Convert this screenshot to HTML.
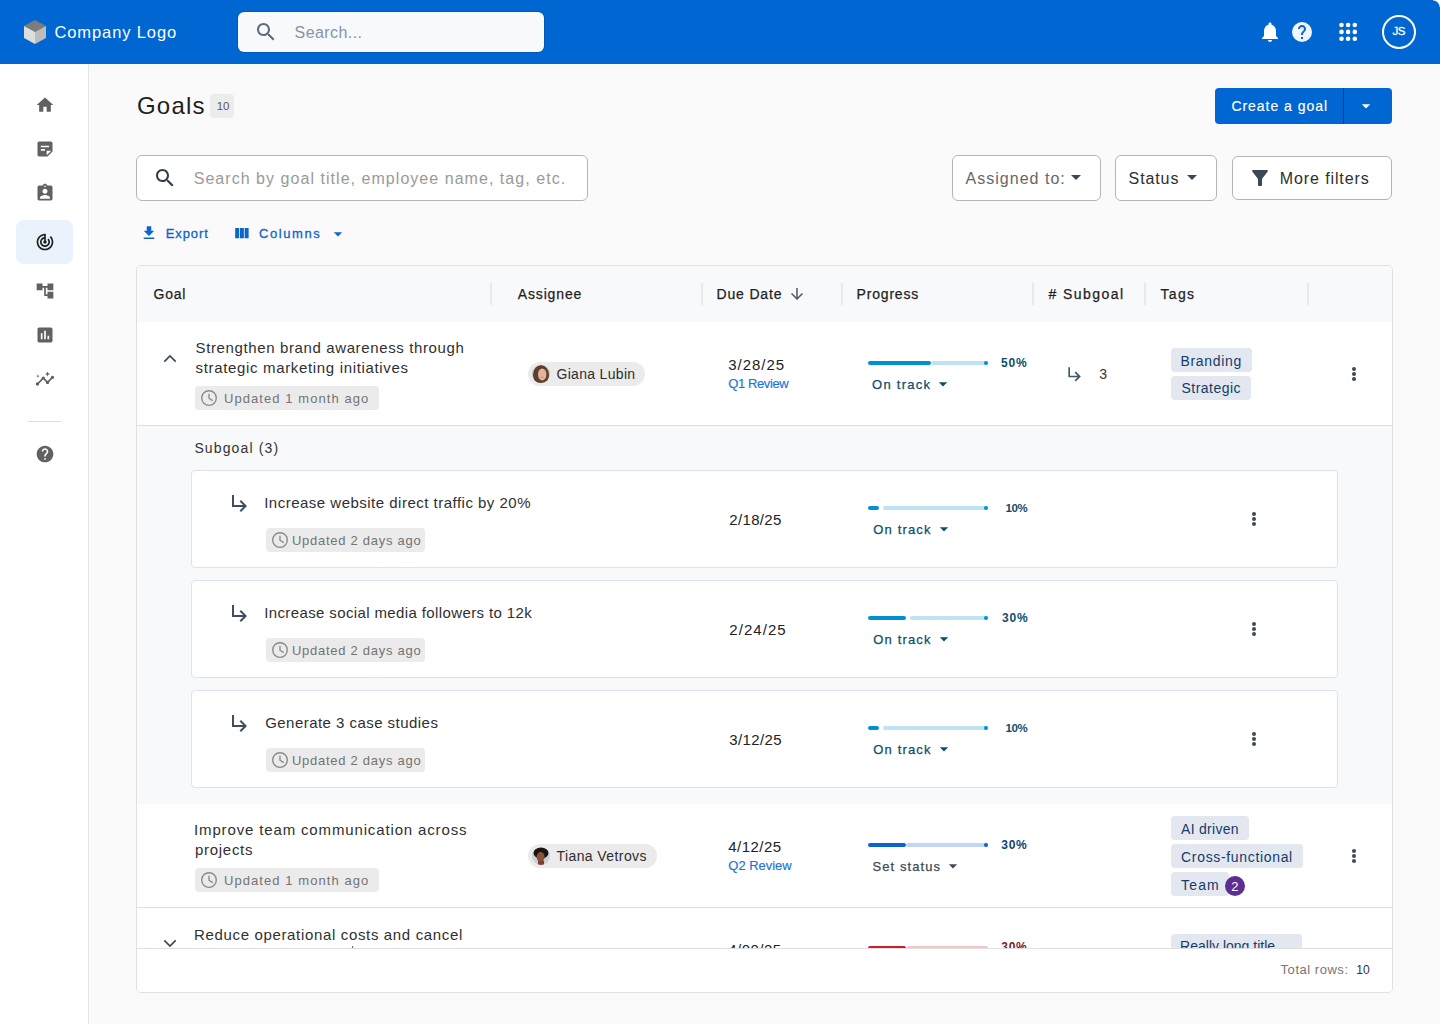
<!DOCTYPE html>
<html><head><meta charset="utf-8"><style>
html,body{margin:0;padding:0;width:1440px;height:1024px;overflow:hidden;background:#fafafa;font-family:"Liberation Sans", sans-serif;}
</style></head><body>
<div style="position:absolute;left:0px;top:0px;width:1440px;height:64px;background:#0066d2"></div>
<div style="position:absolute;left:1433px;top:0px;width:7px;height:7px;background:radial-gradient(circle at 0 100%, rgba(255,255,255,0) 6px, #fff 7px)"></div>
<div style="position:absolute;left:0px;top:64px;width:89px;height:960px;background:#fff;border-right:1px solid #e3e3e3;box-sizing:border-box"></div>
<svg style="position:absolute;left:24px;top:20px;width:22px;height:24px" viewBox="0 0 22 24">
<path d="M11 0.3 L21.7 6 L11 12.2 L0.3 6 Z" fill="#7c7c7c" stroke="#7c7c7c" stroke-width="0.6" stroke-linejoin="round"/>
<path d="M0 6 L11 12 L11 24 L0 18 Z" fill="#dedede"/>
<path d="M22 6 L11 12 L11 24 L22 18 Z" fill="#bdbdbd"/></svg>
<div style="position:absolute;left:238px;top:12px;width:306px;height:40px;background:#f8f9fb;border-radius:6px;box-shadow:0 0 0 1px rgba(0,0,0,0.12)"></div>
<svg style="position:absolute;left:254px;top:20px;width:24px;height:24px" viewBox="0 0 24 24"><path fill="#5b6b7a" d="M15.5 14h-.79l-.28-.27C15.41 12.59 16 11.11 16 9.5 16 5.91 13.09 3 9.5 3S3 5.91 3 9.5 5.91 16 9.5 16c1.61 0 3.09-.59 4.23-1.57l.27.28v.79l5 4.99L20.49 19l-4.99-5zm-6 0C7.01 14 5 11.99 5 9.5S7.01 5 9.5 5 14 7.01 14 9.5 11.99 14 9.5 14z"/></svg>
<svg style="position:absolute;left:1258px;top:19.5px;width:24px;height:24px" viewBox="0 0 24 24"><path fill="#ffffff" d="M12 22c1.1 0 2-.9 2-2h-4c0 1.1.89 2 2 2zm6-6v-5c0-3.07-1.64-5.64-4.5-6.32V4c0-.83-.67-1.5-1.5-1.5s-1.5.67-1.5 1.5v.68C7.63 5.36 6 7.92 6 11v5l-2 2v1h16v-1l-2-2z"/></svg>
<svg style="position:absolute;left:1290px;top:20px;width:24px;height:24px" viewBox="0 0 24 24"><circle cx="12" cy="12" r="10" fill="#f2f6fc"/><path fill="#0066d2" d="M13 19h-2v-2h2v2zm2.07-7.75l-.9.92C13.45 12.9 13 13.5 13 15h-2v-.5c0-1.1.45-2.1 1.17-2.83l1.24-1.26c.37-.36.59-.86.59-1.41 0-1.1-.9-2-2-2s-2 .9-2 2H8c0-2.21 1.79-4 4-4s4 1.79 4 4c0 .88-.36 1.68-.93 2.25z"/></svg>
<svg style="position:absolute;left:1330px;top:14px;width:36px;height:36px" viewBox="0 0 36 36"><circle cx="11.5" cy="11.0" r="2.3" fill="#fff"/><circle cx="11.5" cy="17.9" r="2.3" fill="#fff"/><circle cx="11.5" cy="24.799999999999997" r="2.3" fill="#fff"/><circle cx="18.09999999999991" cy="11.0" r="2.3" fill="#fff"/><circle cx="18.09999999999991" cy="17.9" r="2.3" fill="#fff"/><circle cx="18.09999999999991" cy="24.799999999999997" r="2.3" fill="#fff"/><circle cx="24.799999999999955" cy="11.0" r="2.3" fill="#fff"/><circle cx="24.799999999999955" cy="17.9" r="2.3" fill="#fff"/><circle cx="24.799999999999955" cy="24.799999999999997" r="2.3" fill="#fff"/></svg>
<div style="position:absolute;left:1382px;top:15px;width:34px;height:34px;border:2px solid #fff;border-radius:50%;box-sizing:border-box"></div>
<svg style="position:absolute;left:34.5px;top:95px;width:20px;height:20px" viewBox="0 0 24 24"><path fill="#616161" d="M10 20v-6h4v6h5v-8h3L12 3 2 12h3v8z"/></svg>
<svg style="position:absolute;left:34.5px;top:139px;width:20px;height:20px" viewBox="0 0 24 24"><path fill="#616161" d="M19 3H4.99C3.89 3 3 3.9 3 5l.01 14c0 1.1.89 2 1.99 2h10l6-6V5c0-1.1-.9-2-2-2zM7 8h10v2H7V8zm5 6H7v-2h5v2zm2 5.5V14h5.5L14 19.5z"/></svg>
<svg style="position:absolute;left:34.5px;top:183px;width:20px;height:20px" viewBox="0 0 24 24"><path fill="#616161" d="M19 3h-4.18C14.4 1.84 13.3 1 12 1c-1.3 0-2.4.84-2.82 2H5c-1.1 0-2 .9-2 2v14c0 1.1.9 2 2 2h14c1.1 0 2-.9 2-2V5c0-1.1-.9-2-2-2zm-7 0c.55 0 1 .45 1 1s-.45 1-1 1-1-.45-1-1 .45-1 1-1zm0 4c1.66 0 3 1.34 3 3s-1.34 3-3 3-3-1.34-3-3 1.34-3 3-3zm6 12H6v-1.4c0-2 4-3.1 6-3.1s6 1.1 6 3.1V19z"/></svg>
<div style="position:absolute;left:16px;top:220px;width:57px;height:44px;background:#eaf2fb;border-radius:8px"></div>
<svg style="position:absolute;left:34.5px;top:232px;width:20px;height:20px" viewBox="0 0 24 24"><path fill="#1f1f1f" d="M19.07 4.93l-1.41 1.41C19.1 7.79 20 9.79 20 12c0 4.42-3.58 8-8 8s-8-3.58-8-8c0-4.08 3.05-7.44 7-7.93v2.02C8.16 6.57 6 9.03 6 12c0 3.31 2.69 6 6 6s6-2.69 6-6c0-1.66-.67-3.16-1.76-4.24l-1.41 1.41C15.55 9.9 16 10.9 16 12c0 2.21-1.79 4-4 4s-4-1.79-4-4c0-1.86 1.28-3.41 3-3.86v2.14c-.6.35-1 .98-1 1.72 0 1.1.9 2 2 2s2-.9 2-2c0-.74-.4-1.38-1-1.72V2h-1C6.48 2 2 6.48 2 12s4.48 10 10 10 10-4.48 10-10c0-2.76-1.12-5.26-2.93-7.07z"/></svg>
<svg style="position:absolute;left:34.5px;top:281px;width:20px;height:20px" viewBox="0 0 24 24"><path fill="#616161" d="M22 11V3h-7v3H9V3H2v8h7V8h2v10h4v3h7v-8h-7v3h-2V8h2v3z"/></svg>
<svg style="position:absolute;left:34.5px;top:325px;width:20px;height:20px" viewBox="0 0 24 24"><path fill="#616161" d="M19 3H5c-1.1 0-2 .9-2 2v14c0 1.1.9 2 2 2h14c1.1 0 2-.9 2-2V5c0-1.1-.9-2-2-2zM9 17H7v-7h2v7zm4 0h-2V7h2v10zm4 0h-2v-4h2v4z"/></svg>
<svg style="position:absolute;left:34.5px;top:369px;width:20px;height:20px" viewBox="0 0 24 24"><path fill="#616161" d="M21 8c-1.45 0-2.26 1.44-1.93 2.51l-3.55 3.56c-.3-.09-.74-.09-1.04 0l-2.55-2.55C12.27 10.45 11.46 9 10 9c-1.45 0-2.27 1.44-1.93 2.52l-4.56 4.55C2.44 15.74 1 16.55 1 18c0 1.1.9 2 2 2 1.45 0 2.26-1.44 1.93-2.51l4.55-4.56c.3.09.74.09 1.04 0l2.55 2.55C12.73 16.55 13.54 18 15 18c1.45 0 2.27-1.44 1.93-2.52l3.56-3.55c1.07.33 2.51-.48 2.51-1.93 0-1.1-.9-2-2-2zM15 9l.94-2.07L18 6l-2.06-.93L15 3l-.92 2.07L12 6l2.08.93zM3.5 11L4 9l2-.5L4 8l-.5-2L3 8l-2 .5L3 9z"/></svg>
<div style="position:absolute;left:28px;top:421px;width:33px;height:1px;background:#dcdcdc"></div>
<svg style="position:absolute;left:34.5px;top:444px;width:20px;height:20px" viewBox="0 0 24 24"><path fill="#616161" d="M12 2C6.48 2 2 6.48 2 12s4.48 10 10 10 10-4.48 10-10S17.52 2 12 2zm1 17h-2v-2h2v2zm2.07-7.75l-.9.92C13.45 12.9 13 13.5 13 15h-2v-.5c0-1.1.45-2.1 1.17-2.83l1.24-1.26c.37-.36.59-.86.59-1.41 0-1.1-.9-2-2-2s-2 .9-2 2H8c0-2.21 1.79-4 4-4s4 1.79 4 4c0 .88-.36 1.68-.93 2.25z"/></svg>
<div style="position:absolute;left:210px;top:94px;width:24px;height:24px;background:#ececec;border-radius:4px"></div>
<div style="position:absolute;left:1215px;top:88px;width:177px;height:36px;background:#0066d2;border-radius:4px"></div>
<div style="position:absolute;left:1343px;top:88px;width:1px;height:36px;background:#0a3a78"></div>
<svg style="position:absolute;left:1356px;top:96px;width:20px;height:20px" viewBox="0 0 24 24"><path fill="#ffffff" d="M7 10l5 5 5-5z"/></svg>
<div style="position:absolute;left:136px;top:155px;width:452px;height:46px;background:#fff;border:1px solid #b5b5b5;border-radius:6px;box-sizing:border-box"></div>
<svg style="position:absolute;left:153px;top:166px;width:24px;height:24px" viewBox="0 0 24 24"><path fill="#2f3d4a" d="M15.5 14h-.79l-.28-.27C15.41 12.59 16 11.11 16 9.5 16 5.91 13.09 3 9.5 3S3 5.91 3 9.5 5.91 16 9.5 16c1.61 0 3.09-.59 4.23-1.57l.27.28v.79l5 4.99L20.49 19l-4.99-5zm-6 0C7.01 14 5 11.99 5 9.5S7.01 5 9.5 5 14 7.01 14 9.5 11.99 14 9.5 14z"/></svg>
<div style="position:absolute;left:952px;top:155px;width:149px;height:46px;background:#fff;border:1px solid #b5b5b5;border-radius:6px;box-sizing:border-box"></div>
<svg style="position:absolute;left:1064px;top:165px;width:24px;height:24px" viewBox="0 0 24 24"><path fill="#3a4855" d="M7 10l5 5 5-5z"/></svg>
<div style="position:absolute;left:1115px;top:155px;width:102px;height:46px;background:#fff;border:1px solid #b5b5b5;border-radius:6px;box-sizing:border-box"></div>
<svg style="position:absolute;left:1180px;top:165px;width:24px;height:24px" viewBox="0 0 24 24"><path fill="#3a4855" d="M7 10l5 5 5-5z"/></svg>
<div style="position:absolute;left:1232px;top:156px;width:160px;height:44px;background:#fff;border:1px solid #b5b5b5;border-radius:6px;box-sizing:border-box"></div>
<svg style="position:absolute;left:1248px;top:166px;width:24px;height:24px" viewBox="0 0 24 24"><path fill="#3a4855" d="M4.25 5.61C6.27 8.2 10 13 10 13v6c0 .55.45 1 1 1h2c.55 0 1-.45 1-1v-6s3.72-4.8 5.74-7.39c.51-.66.04-1.61-.79-1.61H5.04c-.83 0-1.3.95-.79 1.61z"/></svg>
<svg style="position:absolute;left:140px;top:224px;width:18px;height:18px" viewBox="0 0 24 24"><path fill="#0a66cc" d="M19 9h-4V3H9v6H5l7 7 7-7zM5 18v2h14v-2H5z"/></svg>
<svg style="position:absolute;left:232.2px;top:223.6px;width:19px;height:19px" viewBox="0 0 24 24"><path fill="#0a66cc" d="M4 5h5v13H4zM10 5h5v13h-5zM16 5h5v13h-5z"/></svg>
<svg style="position:absolute;left:327.6px;top:223.6px;width:20px;height:20px" viewBox="0 0 24 24"><path fill="#0a66cc" d="M7 10l5 5 5-5z"/></svg>
<div style="position:absolute;left:136px;top:265px;width:1257px;height:728px;background:#fff;border:1px solid #e0e0e0;border-radius:5px;box-sizing:border-box"></div>
<div style="position:absolute;left:137px;top:266px;width:1255px;height:56px;background:#f8f9fb;border-radius:4px 4px 0 0"></div>
<div style="position:absolute;left:490px;top:283px;width:2px;height:22px;background:#e8e9eb"></div>
<div style="position:absolute;left:701px;top:283px;width:2px;height:22px;background:#e8e9eb"></div>
<div style="position:absolute;left:841px;top:283px;width:2px;height:22px;background:#e8e9eb"></div>
<div style="position:absolute;left:1031.5px;top:283px;width:2px;height:22px;background:#e8e9eb"></div>
<div style="position:absolute;left:1143.5px;top:283px;width:2px;height:22px;background:#e8e9eb"></div>
<div style="position:absolute;left:1306.5px;top:283px;width:2px;height:22px;background:#e8e9eb"></div>
<svg style="position:absolute;left:788px;top:285px;width:18px;height:18px" viewBox="0 0 24 24"><path fill="#4b5966" d="M20 12l-1.41-1.41L13 16.17V4h-2v12.17l-5.58-5.59L4 12l8 8 8-8z"/></svg>
<svg style="position:absolute;left:160px;top:350px;width:20px;height:16px" viewBox="0 0 20 16"><path d="M4.3 11.6L10 5.9L15.7 11.6" fill="none" stroke="#3d4b58" stroke-width="1.7"/></svg>
<div style="position:absolute;left:195px;top:386px;width:184px;height:24px;background:#ebebeb;border-radius:4px"></div>
<svg style="position:absolute;left:199px;top:388px;width:20px;height:20px" viewBox="0 0 20 20"><circle cx="10" cy="10" r="7.3" fill="none" stroke="#8a8a8a" stroke-width="1.35"/><path d="M10 5.8V10.2L13.7 12.6" fill="none" stroke="#8a8a8a" stroke-width="1.35"/></svg>
<div style="position:absolute;left:528px;top:362px;width:117px;height:24px;background:#ebebeb;border-radius:12px"></div>
<svg style="position:absolute;left:532px;top:365px;width:18px;height:18px" viewBox="0 0 18 18"><defs><clipPath id="ca"><circle cx="9" cy="9" r="9"/></clipPath></defs><g clip-path="url(#ca)"><rect width="18" height="18" fill="#b9c3bd"/><ellipse cx="9" cy="10" rx="8" ry="10" fill="#5e3e2c"/><ellipse cx="10.2" cy="9.6" rx="4.2" ry="6" fill="#e2b49c"/><rect x="8.5" y="11.8" width="3.2" height="1" fill="#c98a82"/><path d="M3 14 Q6 18 9 18 L2 18Z" fill="#4a2e20"/></g></svg>
<div style="position:absolute;left:868px;top:361px;width:62.60000000000002px;height:4px;background:#0091d0;border-radius:2px"></div>
<div style="position:absolute;left:931.1px;top:361px;width:56.89999999999998px;height:4px;background:#bde3f4;border-radius:2px"></div>
<div style="position:absolute;left:984px;top:361px;width:4px;height:4px;background:#0091d0;border-radius:50%"></div>
<svg style="position:absolute;left:933px;top:373.6px;width:20px;height:20px" viewBox="0 0 24 24"><path fill="#0b4f6c" d="M7 10l5 5 5-5z"/></svg>
<svg style="position:absolute;left:1064.6px;top:363.8px;width:20px;height:20px" viewBox="0 0 24 24"><path fill="#435866" d="M19 15l-6 6-1.42-1.42L15.17 16H4V4h2v10h9.17l-3.59-3.58L13 9l6 6z"/></svg>
<div style="position:absolute;left:1171px;top:348px;width:81px;height:24px;background:#e3e8f0;border-radius:4px"></div>
<div style="position:absolute;left:1171px;top:376px;width:80px;height:24px;background:#e3e8f0;border-radius:4px"></div>
<svg style="position:absolute;left:1350px;top:365px;width:8px;height:18px" viewBox="0 0 8 18"><circle cx="4" cy="4" r="2" fill="#3d4a57"/><circle cx="4" cy="9" r="2" fill="#3d4a57"/><circle cx="4" cy="14" r="2" fill="#3d4a57"/></svg>
<div style="position:absolute;left:137px;top:425px;width:1255px;height:1px;background:#e0e0e0"></div>
<div style="position:absolute;left:137px;top:426px;width:1255px;height:378px;background:#f8f9fb"></div>
<div style="position:absolute;left:191px;top:470px;width:1147px;height:98px;background:#fff;border:1px solid #dde3ea;border-radius:4px;box-sizing:border-box"></div>
<svg style="position:absolute;left:227.6px;top:491.2px;width:24px;height:24px" viewBox="0 0 24 24"><path fill="#3d4f60" d="M19 15l-6 6-1.42-1.42L15.17 16H4V4h2v10h9.17l-3.59-3.58L13 9l6 6z"/></svg>
<div style="position:absolute;left:266px;top:528px;width:159px;height:24px;background:#ebebeb;border-radius:4px"></div>
<svg style="position:absolute;left:270px;top:530px;width:20px;height:20px" viewBox="0 0 20 20"><circle cx="10" cy="10" r="7.3" fill="none" stroke="#8a8a8a" stroke-width="1.35"/><path d="M10 5.8V10.2L13.7 12.6" fill="none" stroke="#8a8a8a" stroke-width="1.35"/></svg>
<div style="position:absolute;left:868px;top:506px;width:11px;height:4px;background:#0091d0;border-radius:2px"></div>
<div style="position:absolute;left:883px;top:506px;width:105px;height:4px;background:#bde3f4;border-radius:2px"></div>
<div style="position:absolute;left:984px;top:506px;width:4px;height:4px;background:#0091d0;border-radius:50%"></div>
<svg style="position:absolute;left:934px;top:518.6px;width:20px;height:20px" viewBox="0 0 24 24"><path fill="#0b4f6c" d="M7 10l5 5 5-5z"/></svg>
<svg style="position:absolute;left:1249.5px;top:510px;width:8px;height:18px" viewBox="0 0 8 18"><circle cx="4" cy="4" r="2" fill="#3d4a57"/><circle cx="4" cy="9" r="2" fill="#3d4a57"/><circle cx="4" cy="14" r="2" fill="#3d4a57"/></svg>
<div style="position:absolute;left:191px;top:580px;width:1147px;height:98px;background:#fff;border:1px solid #dde3ea;border-radius:4px;box-sizing:border-box"></div>
<svg style="position:absolute;left:227.6px;top:601.2px;width:24px;height:24px" viewBox="0 0 24 24"><path fill="#3d4f60" d="M19 15l-6 6-1.42-1.42L15.17 16H4V4h2v10h9.17l-3.59-3.58L13 9l6 6z"/></svg>
<div style="position:absolute;left:266px;top:638px;width:159px;height:24px;background:#ebebeb;border-radius:4px"></div>
<svg style="position:absolute;left:270px;top:640px;width:20px;height:20px" viewBox="0 0 20 20"><circle cx="10" cy="10" r="7.3" fill="none" stroke="#8a8a8a" stroke-width="1.35"/><path d="M10 5.8V10.2L13.7 12.6" fill="none" stroke="#8a8a8a" stroke-width="1.35"/></svg>
<div style="position:absolute;left:868px;top:616px;width:38px;height:4px;background:#0091d0;border-radius:2px"></div>
<div style="position:absolute;left:910px;top:616px;width:78px;height:4px;background:#bde3f4;border-radius:2px"></div>
<div style="position:absolute;left:984px;top:616px;width:4px;height:4px;background:#0091d0;border-radius:50%"></div>
<svg style="position:absolute;left:934px;top:628.6px;width:20px;height:20px" viewBox="0 0 24 24"><path fill="#0b4f6c" d="M7 10l5 5 5-5z"/></svg>
<svg style="position:absolute;left:1249.5px;top:620px;width:8px;height:18px" viewBox="0 0 8 18"><circle cx="4" cy="4" r="2" fill="#3d4a57"/><circle cx="4" cy="9" r="2" fill="#3d4a57"/><circle cx="4" cy="14" r="2" fill="#3d4a57"/></svg>
<div style="position:absolute;left:191px;top:690px;width:1147px;height:98px;background:#fff;border:1px solid #dde3ea;border-radius:4px;box-sizing:border-box"></div>
<svg style="position:absolute;left:227.6px;top:711.2px;width:24px;height:24px" viewBox="0 0 24 24"><path fill="#3d4f60" d="M19 15l-6 6-1.42-1.42L15.17 16H4V4h2v10h9.17l-3.59-3.58L13 9l6 6z"/></svg>
<div style="position:absolute;left:266px;top:748px;width:159px;height:24px;background:#ebebeb;border-radius:4px"></div>
<svg style="position:absolute;left:270px;top:750px;width:20px;height:20px" viewBox="0 0 20 20"><circle cx="10" cy="10" r="7.3" fill="none" stroke="#8a8a8a" stroke-width="1.35"/><path d="M10 5.8V10.2L13.7 12.6" fill="none" stroke="#8a8a8a" stroke-width="1.35"/></svg>
<div style="position:absolute;left:868px;top:726px;width:11px;height:4px;background:#0091d0;border-radius:2px"></div>
<div style="position:absolute;left:883px;top:726px;width:105px;height:4px;background:#bde3f4;border-radius:2px"></div>
<div style="position:absolute;left:984px;top:726px;width:4px;height:4px;background:#0091d0;border-radius:50%"></div>
<svg style="position:absolute;left:934px;top:738.6px;width:20px;height:20px" viewBox="0 0 24 24"><path fill="#0b4f6c" d="M7 10l5 5 5-5z"/></svg>
<svg style="position:absolute;left:1249.5px;top:730px;width:8px;height:18px" viewBox="0 0 8 18"><circle cx="4" cy="4" r="2" fill="#3d4a57"/><circle cx="4" cy="9" r="2" fill="#3d4a57"/><circle cx="4" cy="14" r="2" fill="#3d4a57"/></svg>
<div style="position:absolute;left:195px;top:868px;width:184px;height:24px;background:#ebebeb;border-radius:4px"></div>
<svg style="position:absolute;left:199px;top:870px;width:20px;height:20px" viewBox="0 0 20 20"><circle cx="10" cy="10" r="7.3" fill="none" stroke="#8a8a8a" stroke-width="1.35"/><path d="M10 5.8V10.2L13.7 12.6" fill="none" stroke="#8a8a8a" stroke-width="1.35"/></svg>
<div style="position:absolute;left:528px;top:844px;width:129px;height:24px;background:#ebebeb;border-radius:12px"></div>
<svg style="position:absolute;left:532px;top:847px;width:18px;height:18px" viewBox="0 0 18 18"><defs><clipPath id="cb"><circle cx="9" cy="9" r="9"/></clipPath></defs><g clip-path="url(#cb)"><rect width="18" height="18" fill="#c9d2d6"/><ellipse cx="9" cy="6" rx="7.5" ry="5.5" fill="#1b1411"/><ellipse cx="8.6" cy="10" rx="4" ry="5" fill="#8a5038"/><rect x="6" y="14" width="6" height="5" fill="#7a4030"/></g></svg>
<div style="position:absolute;left:868px;top:843px;width:37.60000000000002px;height:4px;background:#0a63ce;border-radius:2px"></div>
<div style="position:absolute;left:906.1px;top:843px;width:81.89999999999998px;height:4px;background:#bfd7f3;border-radius:2px"></div>
<div style="position:absolute;left:984px;top:843px;width:4px;height:4px;background:#0a63ce;border-radius:50%"></div>
<svg style="position:absolute;left:943px;top:855.6px;width:20px;height:20px" viewBox="0 0 24 24"><path fill="#3d4a57" d="M7 10l5 5 5-5z"/></svg>
<div style="position:absolute;left:1171px;top:816px;width:78px;height:24px;background:#e3e8f0;border-radius:4px"></div>
<div style="position:absolute;left:1171px;top:844px;width:132px;height:24px;background:#e3e8f0;border-radius:4px"></div>
<div style="position:absolute;left:1171px;top:872px;width:58px;height:24px;background:#e3e8f0;border-radius:4px"></div>
<div style="position:absolute;left:1225px;top:876px;width:20px;height:20px;background:#5e2d91;border-radius:50%"></div>
<svg style="position:absolute;left:1350px;top:847px;width:8px;height:18px" viewBox="0 0 8 18"><circle cx="4" cy="4" r="2" fill="#3d4a57"/><circle cx="4" cy="9" r="2" fill="#3d4a57"/><circle cx="4" cy="14" r="2" fill="#3d4a57"/></svg>
<div style="position:absolute;left:137px;top:907px;width:1255px;height:1px;background:#e0e0e0"></div>
<svg style="position:absolute;left:160px;top:936px;width:20px;height:16px" viewBox="0 0 20 16"><path d="M4.3 4.4L10 10.1L15.7 4.4" fill="none" stroke="#3d4b58" stroke-width="1.7"/></svg>
<div style="position:absolute;left:351.5px;top:945.5px;width:1.2px;height:2.5px;background:#555;transform:skewX(-20deg)"></div>
<div style="position:absolute;left:868px;top:946px;width:38px;height:4px;background:#c8202f;border-radius:2px"></div>
<div style="position:absolute;left:907px;top:946px;width:81px;height:4px;background:#f3c5c9;border-radius:2px"></div>
<div style="position:absolute;left:1171px;top:934px;width:131px;height:24px;background:#e3e8f0;border-radius:4px"></div>
<div style="position:absolute;left:137px;top:948px;width:1255px;height:44px;background:#fff;border-top:1px solid #e0e0e0;border-radius:0 0 4px 4px;box-sizing:border-box;z-index:5"></div>
<div style="position:absolute;left:54.50px;top:24.33px;font-size:16.5px;line-height:1;white-space:nowrap;color:#ffffff;letter-spacing:0.888px;">Company Logo</div>
<div style="position:absolute;left:294.60px;top:24.56px;font-size:16px;line-height:1;white-space:nowrap;color:#8495ab;letter-spacing:0.427px;">Search...</div>
<div style="position:absolute;left:1392.50px;top:25.87px;font-size:11.5px;line-height:1;white-space:nowrap;color:#ffffff;letter-spacing:-0.600px;-webkit-text-stroke:0.3px #fff">JS</div>
<div style="position:absolute;left:136.90px;top:94.18px;font-size:24px;line-height:1;white-space:nowrap;color:#1e1e1e;letter-spacing:1.251px;">Goals</div>
<div style="position:absolute;left:216.70px;top:100.67px;font-size:11.5px;line-height:1;white-space:nowrap;color:#5a5a5a;letter-spacing:0.000px;">10</div>
<div style="position:absolute;left:1231.40px;top:99.05px;font-size:14px;line-height:1;white-space:nowrap;color:#ffffff;letter-spacing:0.971px;-webkit-text-stroke:0.15px #fff">Create a goal</div>
<div style="position:absolute;left:193.70px;top:171.06px;font-size:16px;line-height:1;white-space:nowrap;color:#9a9a9a;letter-spacing:1.040px;">Search by goal title, employee name, tag, etc.</div>
<div style="position:absolute;left:965.60px;top:171.26px;font-size:16px;line-height:1;white-space:nowrap;color:#666666;letter-spacing:1.008px;">Assigned to:</div>
<div style="position:absolute;left:1128.60px;top:171.26px;font-size:16px;line-height:1;white-space:nowrap;color:#2e2e2e;letter-spacing:0.888px;">Status</div>
<div style="position:absolute;left:1279.80px;top:171.26px;font-size:16px;line-height:1;white-space:nowrap;color:#2e2e2e;letter-spacing:0.889px;">More filters</div>
<div style="position:absolute;left:165.70px;top:226.90px;font-size:13px;line-height:1;white-space:nowrap;color:#0a66cc;letter-spacing:0.908px;-webkit-text-stroke:0.3px #0a66cc">Export</div>
<div style="position:absolute;left:258.90px;top:226.90px;font-size:13px;line-height:1;white-space:nowrap;color:#0a66cc;letter-spacing:1.601px;-webkit-text-stroke:0.3px #0a66cc">Columns</div>
<div style="position:absolute;left:153.50px;top:286.90px;font-size:14px;line-height:1;white-space:nowrap;color:#1f1f1f;letter-spacing:0.779px;-webkit-text-stroke:0.25px #1f1f1f">Goal</div>
<div style="position:absolute;left:517.70px;top:286.90px;font-size:14px;line-height:1;white-space:nowrap;color:#1f1f1f;letter-spacing:0.870px;-webkit-text-stroke:0.25px #1f1f1f">Assignee</div>
<div style="position:absolute;left:716.50px;top:286.90px;font-size:14px;line-height:1;white-space:nowrap;color:#1f1f1f;letter-spacing:0.835px;-webkit-text-stroke:0.25px #1f1f1f">Due Date</div>
<div style="position:absolute;left:856.50px;top:286.90px;font-size:14px;line-height:1;white-space:nowrap;color:#1f1f1f;letter-spacing:0.826px;-webkit-text-stroke:0.25px #1f1f1f">Progress</div>
<div style="position:absolute;left:1048.50px;top:286.90px;font-size:14px;line-height:1;white-space:nowrap;color:#1f1f1f;letter-spacing:1.444px;-webkit-text-stroke:0.25px #1f1f1f"># Subgoal</div>
<div style="position:absolute;left:1160.60px;top:286.90px;font-size:14px;line-height:1;white-space:nowrap;color:#1f1f1f;letter-spacing:1.276px;-webkit-text-stroke:0.25px #1f1f1f">Tags</div>
<div style="position:absolute;left:195.50px;top:339.90px;font-size:15px;line-height:1;white-space:nowrap;color:#303030;letter-spacing:0.626px;">Strengthen brand awareness through</div>
<div style="position:absolute;left:195.50px;top:360.00px;font-size:15px;line-height:1;white-space:nowrap;color:#303030;letter-spacing:0.664px;">strategic marketing initiatives</div>
<div style="position:absolute;left:224.00px;top:392.40px;font-size:13px;line-height:1;white-space:nowrap;color:#737373;letter-spacing:1.066px;">Updated 1 month ago</div>
<div style="position:absolute;left:556.50px;top:367.15px;font-size:14px;line-height:1;white-space:nowrap;color:#2e2e2e;letter-spacing:0.308px;">Giana Lubin</div>
<div style="position:absolute;left:728.30px;top:356.50px;font-size:15px;line-height:1;white-space:nowrap;color:#222;letter-spacing:0.966px;">3/28/25</div>
<div style="position:absolute;left:728.30px;top:376.90px;font-size:13px;line-height:1;white-space:nowrap;color:#1a73d9;letter-spacing:-0.399px;-webkit-text-stroke:0.15px #1a73d9">Q1 Review</div>
<div style="position:absolute;left:1001.00px;top:357.14px;font-size:12px;line-height:1;white-space:nowrap;color:#0b4f6c;letter-spacing:0.826px;font-weight:bold;">50%</div>
<div style="position:absolute;left:872.00px;top:377.60px;font-size:13px;line-height:1;white-space:nowrap;color:#0b4f6c;letter-spacing:1.282px;-webkit-text-stroke:0.25px #0b4f6c">On track</div>
<div style="position:absolute;left:1099.30px;top:367.15px;font-size:14px;line-height:1;white-space:nowrap;color:#333;letter-spacing:0.000px;">3</div>
<div style="position:absolute;left:1180.50px;top:353.85px;font-size:14px;line-height:1;white-space:nowrap;color:#163a6a;letter-spacing:0.678px;">Branding</div>
<div style="position:absolute;left:1181.50px;top:381.35px;font-size:14px;line-height:1;white-space:nowrap;color:#163a6a;letter-spacing:0.469px;">Strategic</div>
<div style="position:absolute;left:194.40px;top:441.25px;font-size:14px;line-height:1;white-space:nowrap;color:#333;letter-spacing:1.128px;">Subgoal (3)</div>
<div style="position:absolute;left:264.20px;top:495.10px;font-size:15px;line-height:1;white-space:nowrap;color:#303030;letter-spacing:0.491px;">Increase website direct traffic by 20%</div>
<div style="position:absolute;left:292.00px;top:534.40px;font-size:13px;line-height:1;white-space:nowrap;color:#737373;letter-spacing:0.727px;">Updated 2 days ago</div>
<div style="position:absolute;left:729.30px;top:511.70px;font-size:15px;line-height:1;white-space:nowrap;color:#222;letter-spacing:0.333px;">2/18/25</div>
<div style="position:absolute;left:1005.60px;top:502.57px;font-size:11.5px;line-height:1;white-space:nowrap;color:#0b4f6c;letter-spacing:-0.396px;font-weight:bold;">10%</div>
<div style="position:absolute;left:873.30px;top:522.60px;font-size:13px;line-height:1;white-space:nowrap;color:#0b4f6c;letter-spacing:1.154px;-webkit-text-stroke:0.25px #0b4f6c">On track</div>
<div style="position:absolute;left:264.20px;top:605.10px;font-size:15px;line-height:1;white-space:nowrap;color:#303030;letter-spacing:0.380px;">Increase social media followers to 12k</div>
<div style="position:absolute;left:292.00px;top:644.40px;font-size:13px;line-height:1;white-space:nowrap;color:#737373;letter-spacing:0.727px;">Updated 2 days ago</div>
<div style="position:absolute;left:729.30px;top:621.70px;font-size:15px;line-height:1;white-space:nowrap;color:#222;letter-spacing:1.049px;">2/24/25</div>
<div style="position:absolute;left:1002.00px;top:612.14px;font-size:12px;line-height:1;white-space:nowrap;color:#0b4f6c;letter-spacing:0.826px;font-weight:bold;">30%</div>
<div style="position:absolute;left:873.30px;top:632.60px;font-size:13px;line-height:1;white-space:nowrap;color:#0b4f6c;letter-spacing:1.154px;-webkit-text-stroke:0.25px #0b4f6c">On track</div>
<div style="position:absolute;left:265.20px;top:715.10px;font-size:15px;line-height:1;white-space:nowrap;color:#303030;letter-spacing:0.459px;">Generate 3 case studies</div>
<div style="position:absolute;left:292.00px;top:754.40px;font-size:13px;line-height:1;white-space:nowrap;color:#737373;letter-spacing:0.727px;">Updated 2 days ago</div>
<div style="position:absolute;left:729.30px;top:731.70px;font-size:15px;line-height:1;white-space:nowrap;color:#222;letter-spacing:0.383px;">3/12/25</div>
<div style="position:absolute;left:1005.60px;top:722.57px;font-size:11.5px;line-height:1;white-space:nowrap;color:#0b4f6c;letter-spacing:-0.396px;font-weight:bold;">10%</div>
<div style="position:absolute;left:873.30px;top:742.60px;font-size:13px;line-height:1;white-space:nowrap;color:#0b4f6c;letter-spacing:1.154px;-webkit-text-stroke:0.25px #0b4f6c">On track</div>
<div style="position:absolute;left:194.00px;top:822.30px;font-size:15px;line-height:1;white-space:nowrap;color:#303030;letter-spacing:0.857px;">Improve team communication across</div>
<div style="position:absolute;left:195.00px;top:842.30px;font-size:15px;line-height:1;white-space:nowrap;color:#303030;letter-spacing:0.711px;">projects</div>
<div style="position:absolute;left:224.00px;top:874.40px;font-size:13px;line-height:1;white-space:nowrap;color:#737373;letter-spacing:1.066px;">Updated 1 month ago</div>
<div style="position:absolute;left:556.50px;top:849.15px;font-size:14px;line-height:1;white-space:nowrap;color:#2e2e2e;letter-spacing:0.410px;">Tiana Vetrovs</div>
<div style="position:absolute;left:728.30px;top:838.50px;font-size:15px;line-height:1;white-space:nowrap;color:#222;letter-spacing:0.466px;">4/12/25</div>
<div style="position:absolute;left:728.30px;top:858.90px;font-size:13px;line-height:1;white-space:nowrap;color:#1a73d9;letter-spacing:-0.024px;-webkit-text-stroke:0.15px #1a73d9">Q2 Review</div>
<div style="position:absolute;left:1001.30px;top:839.14px;font-size:12px;line-height:1;white-space:nowrap;color:#0e3f75;letter-spacing:0.676px;font-weight:bold;">30%</div>
<div style="position:absolute;left:872.50px;top:859.60px;font-size:13px;line-height:1;white-space:nowrap;color:#3d4a57;letter-spacing:1.077px;-webkit-text-stroke:0.25px #3d4a57">Set status</div>
<div style="position:absolute;left:1181.10px;top:821.75px;font-size:14px;line-height:1;white-space:nowrap;color:#163a6a;letter-spacing:0.280px;">AI driven</div>
<div style="position:absolute;left:1181.10px;top:849.75px;font-size:14px;line-height:1;white-space:nowrap;color:#163a6a;letter-spacing:0.664px;">Cross-functional</div>
<div style="position:absolute;left:1181.10px;top:877.75px;font-size:14px;line-height:1;white-space:nowrap;color:#163a6a;letter-spacing:1.143px;">Team</div>
<div style="position:absolute;left:1231.30px;top:880.00px;font-size:13px;line-height:1;white-space:nowrap;color:#fff;letter-spacing:0.000px;">2</div>
<div style="position:absolute;left:194.00px;top:926.80px;font-size:15px;line-height:1;white-space:nowrap;color:#303030;letter-spacing:0.657px;">Reduce operational costs and cancel</div>
<div style="position:absolute;left:728.30px;top:942.30px;font-size:15px;line-height:1;white-space:nowrap;color:#222;letter-spacing:0.466px;">4/00/25</div>
<div style="position:absolute;left:1001.30px;top:940.84px;font-size:12px;line-height:1;white-space:nowrap;color:#7a1a22;letter-spacing:0.676px;font-weight:bold;">30%</div>
<div style="position:absolute;left:1180.10px;top:939.25px;font-size:14px;line-height:1;white-space:nowrap;color:#163a6a;letter-spacing:0.000px;">Really long title</div>
<div style="position:absolute;left:1280.60px;top:963.20px;font-size:13px;line-height:1;white-space:nowrap;color:#767676;letter-spacing:0.528px;z-index:6">Total rows:</div>
<div style="position:absolute;left:1356.25px;top:964.04px;font-size:12px;line-height:1;white-space:nowrap;color:#333;letter-spacing:0.000px;z-index:6">10</div>
</body></html>
